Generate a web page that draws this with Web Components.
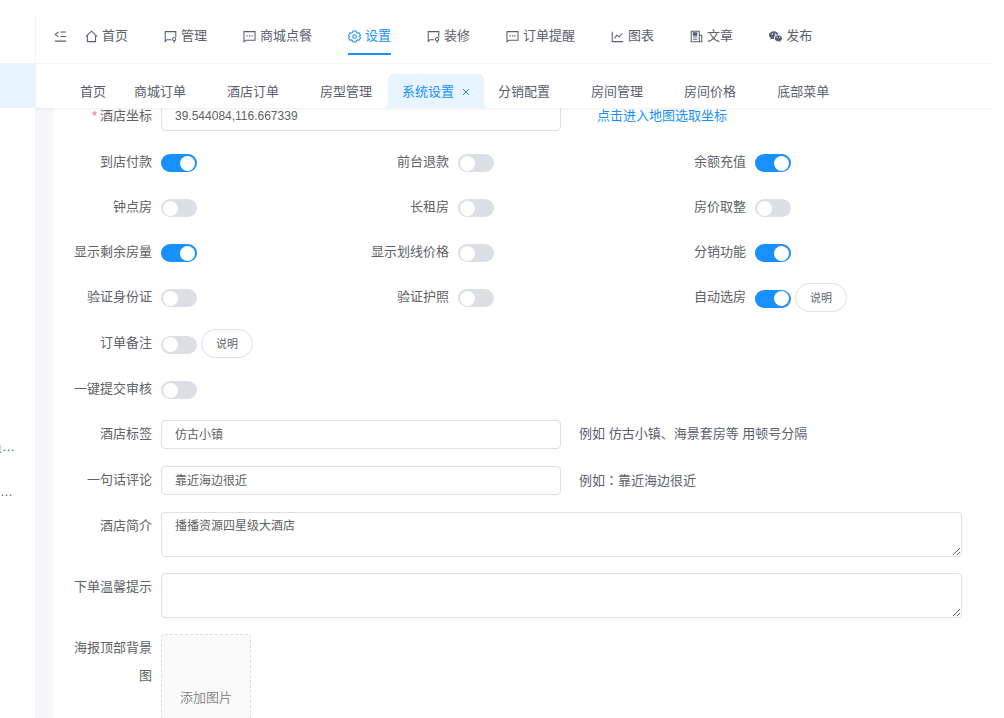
<!DOCTYPE html>
<html lang="zh-CN">
<head>
<meta charset="utf-8">
<title>系统设置</title>
<style>
  html, body { height: 100%; margin: 0; }
  body {
    --primary: #1890ff;
    --primary-soft: #e8f4ff;
    --text: #606266;
    --nav: #5a6072;
    --border: #dcdfe6;
    background: #fff; color: var(--text); overflow: hidden;
    font: 13px/28px "Liberation Sans", "Noto Sans CJK SC", sans-serif;
  }
  .colon { font-family: "Noto Sans CJK TC", sans-serif; }
</style>
</head>
<body>
<app-shell>
  <side-bar slot="side"></side-bar>

  <nav-item slot="nav" icon="home">首页</nav-item>
  <nav-item slot="nav" icon="board">管理</nav-item>
  <nav-item slot="nav" icon="chat">商城点餐</nav-item>
  <nav-item slot="nav" icon="gear" active>设置</nav-item>
  <nav-item slot="nav" icon="board">装修</nav-item>
  <nav-item slot="nav" icon="chat">订单提醒</nav-item>
  <nav-item slot="nav" icon="chart">图表</nav-item>
  <nav-item slot="nav" icon="article">文章</nav-item>
  <nav-item slot="nav" icon="wechat">发布</nav-item>

  <tab-item slot="tabs" fixed>首页</tab-item>
  <tab-item slot="tabs">商城订单</tab-item>
  <tab-item slot="tabs">酒店订单</tab-item>
  <tab-item slot="tabs">房型管理</tab-item>
  <tab-item slot="tabs" active>系统设置</tab-item>
  <tab-item slot="tabs">分销配置</tab-item>
  <tab-item slot="tabs">房间管理</tab-item>
  <tab-item slot="tabs">房间价格</tab-item>
  <tab-item slot="tabs">底部菜单</tab-item>

  <settings-form>
    <text-field label="酒店坐标" value="39.544084,116.667339" required link="点击进入地图选取坐标"></text-field>
    <field-grid>
      <switch-field label="到店付款" checked></switch-field>
      <switch-field label="前台退款"></switch-field>
      <switch-field label="余额充值" checked></switch-field>
      <switch-field label="钟点房"></switch-field>
      <switch-field label="长租房"></switch-field>
      <switch-field label="房价取整"></switch-field>
      <switch-field label="显示剩余房量" checked></switch-field>
      <switch-field label="显示划线价格"></switch-field>
      <switch-field label="分销功能" checked></switch-field>
      <switch-field label="验证身份证"></switch-field>
      <switch-field label="验证护照"></switch-field>
      <switch-field label="自动选房" checked help="说明"></switch-field>
    </field-grid>
    <switch-field label="订单备注" help="说明"></switch-field>
    <switch-field label="一键提交审核"></switch-field>
    <text-field label="酒店标签" value="仿古小镇">例如 仿古小镇、海景套房等 用顿号分隔</text-field>
    <text-field label="一句话评论" value="靠近海边很近">例如<span class="colon" lang="zh-TW">：</span>靠近海边很近</text-field>
    <area-field label="酒店简介" value="播播资源四星级大酒店"></area-field>
    <area-field label="下单温馨提示"></area-field>
    <upload-field label="海报顶部背景图">添加图片</upload-field>
  </settings-form>
</app-shell>

<script>
const ICONS = {
  fold: '<path d="M8 2.500h7M8 8h7M1 13.700h14M5.500 2.500L1.500 5.500 5.500 8.500"/>',
  home: '<path d="M1 8.2L8 1.5l7 6.7M3 7v7.3h10V7"/>',
  board: '<path d="M9 12H3.500L1.500 14V2h13v6.500"/><circle cx="12.500" cy="11.300" r="2"/><path d="M12.500 13.300V16"/>',
  chat: '<path d="M1.2 14.5V2h13.6v10.5H3.6z"/><path d="M4.2 7.2h1.6M7.2 7.2h1.6M10.2 7.2h1.6"/>',
  gear: '<path d="M6.2 1.2h3.6l.6 1.8 1.3.8 1.9-.4 1.8 3.1-1.3 1.5 1.3 1.5-1.8 3.1-1.9-.4-1.3.8-.6 1.8H6.2L5.6 13l-1.3-.8-1.9.4L.6 9.500l1.300-1.500L.6 6.500l1.800-3.100 1.900.400L5.600 3z"/><circle cx="8" cy="8" r="2.200"/>',
  chart: '<path d="M1.500 2v12.300H15M4 10.500l3.200-4 2.800 2L14 4.300"/>',
  article: '<path d="M1.500 1.500h10v13h-10zM11.500 6.500h3v8h-3M4 8.500h5M4 11.500h5"/><path d="M4 3.500h4.500v3H4z" fill="currentColor"/>',
  wechat: '<g fill="currentColor" stroke="none"><path fill-rule="evenodd" d="M6 1.500C2.700 1.500 0 3.600 0 6.300c0 1.600.900 2.900 2.300 3.800l-.5 1.800 2-1.100c.8.200 1.600.3 2.400.3C5.500 8 8 5.500 11.900 5.600 11.300 3.200 8.900 1.500 6 1.500zM4 4a.9.9 0 1 1 0 1.800A.9.9 0 0 1 4 4zm4 0a.9.9 0 1 1 0 1.800A.9.9 0 0 1 8 4z"/><path fill-rule="evenodd" d="M11.500 6.400C8.900 6.400 7 8.100 7 10.200s2 3.800 4.500 3.800c.6 0 1.100-.1 1.600-.2l1.500.8-.4-1.400c1.100-.7 1.800-1.800 1.800-3 0-2.100-2-3.800-4.500-3.800zM10 8.300a.7.7 0 1 1 0 1.400.7.700 0 0 1 0-1.400zm3 0a.7.700 0 1 1 0 1.400.7.700 0 0 1 0-1.400z"/></g>'
};
const icon = name => `<svg viewBox="0 0 16 16" width="13" height="13" fill="none" stroke="currentColor" stroke-width="1.3" aria-hidden="true">${ICONS[name]}</svg>`;

class Base extends HTMLElement {
  connectedCallback() {
    if (this.shadowRoot) return;
    this.attachShadow({ mode: 'open' }).innerHTML =
      `<style>*{box-sizing:border-box}${this.css()}</style>${this.html()}`;
  }
  attr(name) { return this.getAttribute(name) || ''; }
}

const fieldCss = `
  :host { display: flex; align-items: flex-start; min-width: 0; }
  .label { flex: none; width: 90px; padding-right: 9px; text-align: right; line-height: 28px; }
  input, textarea, button { font-family: inherit; color: inherit; margin: 0; }
`;

customElements.define('app-shell', class extends Base {
  css() { return `
    :host { display: flex; height: 100vh; padding: 14px 12px 0 0; box-sizing: border-box; overflow: hidden; }
    .side { flex: none; width: 36px; border-right: 1px solid #f3f4f5; overflow: hidden; }
    .page { flex: 1; min-width: 0; display: flex; flex-direction: column; overflow: hidden; }
    header { position: relative; z-index: 1; background: #fff; box-shadow: 0 1px 3px rgba(0,21,41,.07); color: var(--nav); }
    .top { display: flex; align-items: flex-start; height: 50px; padding: 5px 0 0 18px; border-bottom: 1px solid #f6f6f6; }
    .fold { display: flex; align-items: center; height: 34px; border: 0; padding: 0; background: none; color: inherit; margin-right: 18px; }
    nav { display: flex; gap: 36px; }
    .tabs { display: flex; align-items: flex-end; height: 44px; padding-left: 30px; }
    main { flex: 1; min-height: 0; overflow: hidden; background: #f5f7fa; padding-left: 17px; }
  `; }
  html() { return `
    <div class="side"><slot name="side"></slot></div>
    <div class="page">
      <header>
        <div class="top">
          <button class="fold" type="button" aria-label="折叠菜单">${icon('fold')}</button>
          <nav><slot name="nav"></slot></nav>
        </div>
        <div class="tabs"><slot name="tabs"></slot></div>
      </header>
      <main><slot></slot></main>
    </div>`; }
});

customElements.define('side-bar', class extends Base {
  css() { return `
    :host { display: block; padding-top: 49px; }
    .item { display: flex; justify-content: flex-end; height: 45px; line-height: 45px; white-space: nowrap; padding-right: 20px; }
    .current { background: var(--primary-soft); }
    .group { margin-top: 316px; }
    .short { padding-right: 22px; }
  `; }
  html() { return `
    <div class="item current"></div>
    <div class="group"><div class="item">员…</div><div class="item short">…</div></div>`; }
});

customElements.define('nav-item', class extends Base {
  css() { return `
    :host { display: block; }
    a { display: flex; align-items: center; gap: 4px; height: 36px; color: inherit; text-decoration: none; white-space: nowrap; border-bottom: 2px solid transparent; }
    svg { flex: none; }
    :host([active]) a { color: var(--primary); border-color: var(--primary); }
  `; }
  html() { return `<a href="#">${icon(this.attr('icon'))}<slot></slot></a>`; }
});

customElements.define('tab-item', class extends Base {
  css() { return `
    :host { display: block; flex: none; }
    .tab { display: flex; align-items: center; height: 34px; padding: 2px 27px 0 14px; white-space: nowrap; }
    a { color: inherit; text-decoration: none; }
    :host([fixed]) .tab { padding-right: 14px; }
    :host([active]) .tab { position: relative; gap: 8px; margin-left: -11px; padding-right: 14px; background: var(--primary-soft); color: var(--primary); border-radius: 5px 5px 0 0; }
    :host([active]) .tab::before, :host([active]) .tab::after { content: ""; position: absolute; bottom: 0; width: 5px; height: 5px; }
    .tab::before { right: 100%; background: radial-gradient(circle at 0 0, transparent 5px, var(--primary-soft) 5px); }
    .tab::after { left: 100%; background: radial-gradient(circle at 100% 0, transparent 5px, var(--primary-soft) 5px); }
    button { display: flex; border: 0; padding: 0; background: none; color: inherit; }
  `; }
  html() {
    const close = this.hasAttribute('active')
      ? '<button type="button" aria-label="关闭"><svg viewBox="0 0 8 8" width="8" height="8" stroke="currentColor" stroke-width="1"><path d="M1 1l6 6M7 1L1 7"/></svg></button>' : '';
    return `<div class="tab"><a href="#"><slot></slot></a>${close}</div>`;
  }
});

customElements.define('settings-form', class extends Base {
  css() { return `
    :host { display: block; background: #fff; }
    form { display: flex; flex-direction: column; gap: 17px; margin-top: -6px; padding: 0 30px 18px 18px; }
  `; }
  html() { return '<form><slot></slot></form>'; }
});

customElements.define('field-grid', class extends Base {
  css() { return ':host { display: grid; grid-template-columns: repeat(3, minmax(0, 1fr)); gap: 17px 0; }'; }
  html() { return '<slot></slot>'; }
});

customElements.define('switch-field', class extends Base {
  css() { return fieldCss + `
    .control { display: flex; align-items: center; gap: 4px; min-height: 28px; }
    .switch { appearance: none; width: 36px; height: 18px; margin-top: 2px; border-radius: 9px; background: var(--border); display: flex; align-items: center; padding: 0 2px; }
    .switch::before { content: ""; width: 15px; height: 15px; border-radius: 50%; background: #fff; }
    .switch:checked { background: var(--primary); justify-content: flex-end; }
    .help { height: 29px; width: 52px; padding: 0 0 2px; border: 1px solid var(--border); border-radius: 15px; background: #fff; font-size: 11px; }
  `; }
  html() { return `
    <label class="label" for="c">${this.attr('label')}</label>
    <div class="control"><input class="switch" id="c" type="checkbox" role="switch"${this.hasAttribute('checked') ? ' checked' : ''}>
    ${this.attr('help') ? `<button class="help" type="button">${this.attr('help')}</button>` : ''}</div>`; }
});

customElements.define('text-field', class extends Base {
  css() { return fieldCss + `
    input { flex: none; width: calc(55% - 90px); height: 29px; padding: 0 13px 2px; border: 1px solid var(--border); border-radius: 4px; background: #fff; font-size: 12px; outline: 0; }
    .note { padding-left: 18px; color: var(--nav); }
    .star { color: #f56c6c; margin-right: 3px; }
    a { margin-left: 36px; color: var(--primary); text-decoration: none; }
  `; }
  html() { return `
    <label class="label" for="c">${this.hasAttribute('required') ? '<span class="star">*</span>' : ''}${this.attr('label')}</label>
    <input id="c" type="text" value="${this.attr('value')}">
    ${this.attr('link') ? `<a href="#">${this.attr('link')}</a>` : '<div class="note"><slot></slot></div>'}`; }
});

customElements.define('area-field', class extends Base {
  css() { return fieldCss + `
    textarea { flex: 1; min-width: 0; height: 45px; margin-bottom: -1px; padding: 4px 13px; border: 1px solid var(--border); border-radius: 4px; background: #fff; font-size: 12px; line-height: 18px; resize: vertical; outline: 0; }
  `; }
  html() { return `
    <label class="label" for="c">${this.attr('label')}</label>
    <textarea id="c">${this.attr('value')}</textarea>`; }
});

customElements.define('upload-field', class extends Base {
  css() { return fieldCss + `
    button { width: 90px; height: 124px; padding: 0; border: 1px dashed var(--border); border-radius: 4px; background: #fafafa; color: #8c8c8c; font-size: 13px; }
  `; }
  html() { return `
    <label class="label" for="c">${this.attr('label')}</label>
    <button id="c" type="button"><slot></slot></button>`; }
});
</script>
</body>
</html>
